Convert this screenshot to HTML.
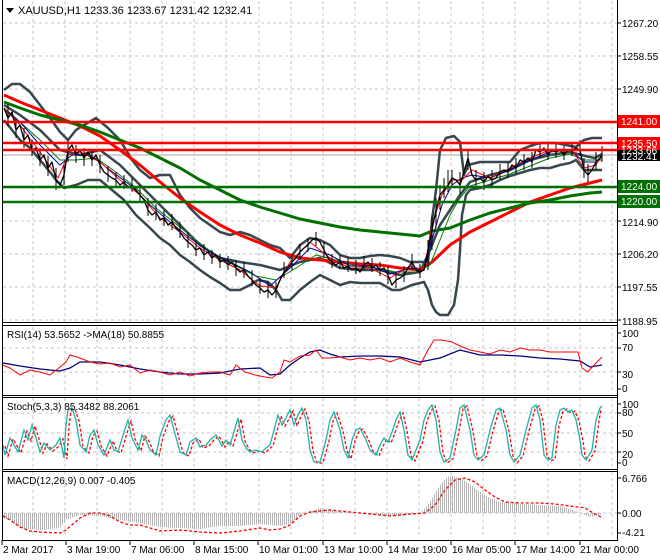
<!DOCTYPE html>
<html><head><meta charset="utf-8"><style>
html,body{margin:0;padding:0;background:#fff;}
svg{display:block;font-family:"Liberation Sans",sans-serif;}
</style></head><body>
<svg width="660" height="560" viewBox="0 0 660 560" xmlns="http://www.w3.org/2000/svg">
<defs>
<pattern id="h" width="2" height="10" patternUnits="userSpaceOnUse"><rect width="1" height="10" fill="#b4b4b4"/></pattern>
<clipPath id="cm"><rect x="3" y="1" width="614" height="321"/></clipPath>
</defs>
<rect width="660" height="560" fill="#fff"/>
<!-- grid -->
<g stroke="#c4c4c4" stroke-width="1" stroke-dasharray="3,3" fill="none">
<path d="M33 1V322M65 1V322M97 1V322M130 1V322M162 1V322M194 1V322M226 1V322M259 1V322M291 1V322M323 1V322M355 1V322M387 1V322M419 1V322M451 1V322M483 1V322M515 1V322M548 1V322M580 1V322M612 1V322"/>
<path d="M33 327V394M65 327V394M97 327V394M130 327V394M162 327V394M194 327V394M226 327V394M259 327V394M291 327V394M323 327V394M355 327V394M387 327V394M419 327V394M451 327V394M483 327V394M515 327V394M548 327V394M580 327V394M612 327V394"/>
<path d="M33 398V468M65 398V468M97 398V468M130 398V468M162 398V468M194 398V468M226 398V468M259 398V468M291 398V468M323 398V468M355 398V468M387 398V468M419 398V468M451 398V468M483 398V468M515 398V468M548 398V468M580 398V468M612 398V468"/>
<path d="M33 472V538M65 472V538M97 472V538M130 472V538M162 472V538M194 472V538M226 472V538M259 472V538M291 472V538M323 472V538M355 472V538M387 472V538M419 472V538M451 472V538M483 472V538M515 472V538M548 472V538M580 472V538M612 472V538"/>
<path d="M3 23H617M3 56H617M3 89H617M3 122H617M3 155H617M3 188H617M3 221H617M3 254H617M3 287H617M3 320H617"/>
<path d="M3 348H617M3 372H617M3 413H617M3 433H617M3 452H617M3 513H617"/>
</g>
<g clip-path="url(#cm)" fill="none" stroke-linejoin="round">
<line x1="3" y1="155" x2="617" y2="155" stroke="#c0c0c0" stroke-width="1.5"/>
<!-- bollinger -->
<polyline stroke="#37474f" stroke-width="2.5" points="4,90 12,84 20,84 30,92 40,105 50,118 60,132 68,140 76,130 84,125 96,118 108,128 120,140 132,160 140,170 150,178 160,175 170,175 180,195 190,208 200,218 210,225 220,232 230,235 240,232 250,235 260,240 270,245 280,248 290,258 300,245 310,238 320,240 330,245 340,255 350,258 360,258 370,256 380,255 390,256 400,258 410,262 420,262 428,262 432,220 436,190 440,150 446,138 454,136 460,142 464,175 468,165 480,162 490,162 500,162 510,162 520,150 530,146 540,143 548,143 556,143 566,145 576,147 584,140 592,138 602,138"/>
<polyline stroke="#37474f" stroke-width="2.5" points="4,120 12,130 20,140 30,148 40,160 50,172 56,180 64,188 76,185 88,180 100,180 112,190 124,200 136,215 150,228 160,238 170,245 180,255 190,262 200,270 210,277 220,283 230,290 240,290 250,285 258,280 268,282 276,290 282,300 290,300 300,290 310,282 320,275 330,280 340,285 350,282 360,283 370,283 380,283 392,290 400,290 412,285 424,282 428,290 432,305 436,312 440,315 448,315 454,305 458,280 460,250 462,215 466,195 470,190 480,188 490,185 500,180 510,176 520,173 530,170 540,168 550,168 560,165 570,163 576,160 584,170 592,170 602,170"/>
<polyline stroke="#37474f" stroke-width="2.5" points="4,105 20,115 40,130 60,150 80,155 100,150 120,165 140,185 160,205 180,225 200,245 220,258 240,262 260,265 280,270 300,262 320,258 340,268 360,270 380,270 400,275 420,272 430,250 440,225 450,210 460,195 470,182 490,175 510,170 530,160 550,155 570,152 585,156 595,158 602,154"/>
<!-- slow MAs -->
<polyline stroke="#ff0000" stroke-width="3" points="4,95 20,102 40,110 60,118 80,126 100,136 120,150 140,165 160,182 180,198 200,212 220,225 240,235 260,243 280,252 300,258 320,260 340,262 360,264 380,265 400,268 420,270 432,262 450,245 470,232 490,222 510,212 530,202 550,195 570,188 590,183 602,180"/>
<polyline stroke="#007000" stroke-width="3" points="4,102 20,108 40,115 60,120 80,125 100,132 120,140 140,148 160,158 180,168 200,180 220,190 240,200 260,207 280,213 300,219 320,223 340,227 360,230 380,232 400,234 420,236 432,231 450,228 470,220 490,213 510,208 530,203 550,200 570,196 590,193 602,192"/>
<!-- thin MAs -->
<polyline stroke="#008000" stroke-width="1" points="4,110 20,122 40,140 60,160 76,160 96,158 116,172 136,188 156,208 176,224 196,240 216,256 236,266 256,276 276,280 296,268 316,255 336,260 356,266 376,268 396,272 416,272 430,265 440,240 450,215 460,198 470,186 490,180 510,174 530,166 550,158 570,154 585,160 602,160"/>
<polyline stroke="#0000a0" stroke-width="1" points="4,108 20,122 40,145 60,165 72,155 90,155 110,170 130,185 150,205 170,222 190,238 210,252 230,262 250,272 270,286 290,268 310,248 330,255 350,266 370,266 390,274 410,268 424,270 432,240 442,205 452,185 462,178 472,175 490,178 510,170 530,160 550,152 570,150 584,162 596,162 602,156"/>
<polyline stroke="#ff0000" stroke-width="1" points="4,108 20,125 40,152 58,178 68,155 80,152 100,162 120,180 140,195 160,218 180,232 200,248 220,260 240,270 260,286 276,288 290,262 310,242 330,258 350,268 370,268 390,278 410,266 424,270 432,225 442,195 452,180 462,180 472,170 490,178 510,168 530,158 550,150 572,150 584,168 596,165 602,156"/>
<!-- price bars -->
<polyline stroke="#000" stroke-width="1.3" points="4,108 8,118 12,112 16,130 20,125 24,140 28,135 32,150 36,148 40,160 44,155 48,168 52,162 56,180 60,185 64,175 68,150 72,145 76,155 80,150 84,158 88,152 92,160 96,155 100,165 104,172 108,175 112,178 116,180 120,185 124,182 128,188 132,185 136,190 140,195 144,200 148,210 152,215 156,212 160,220 164,218 168,225 172,222 176,228 180,232 184,238 188,242 192,245 196,250 200,248 204,255 208,252 212,258 216,255 220,262 224,260 228,265 232,262 236,268 240,272 244,270 248,276 252,280 256,285 260,288 264,292 268,290 272,295 276,290 280,280 284,272 288,268 292,262 296,258 300,252 304,248 308,245 312,240 316,238 320,242 324,250 328,258 332,262 336,265 340,262 344,268 348,266 352,270 356,268 360,272 364,265 368,262 372,268 376,265 380,270 384,268 388,275 392,285 396,280 400,278 404,275 408,268 412,262 416,270 420,272 424,270 428,250 432,230 436,210 440,195 444,190 448,185 452,178 456,180 460,185 464,172 468,158 472,175 476,180 480,178 484,182 488,176 492,180 496,178 500,172 504,170 508,172 512,165 516,168 520,160 524,162 528,158 532,162 536,150 540,152 544,148 548,155 552,150 556,152 560,150 564,155 568,150 572,150 576,148 580,150 584,170 588,175 592,170 596,162 600,158 602,155"/>
<path stroke="#000" stroke-width="1" d="M8 104v22M16 118v20M24 128v20M32 140v16M40 148v18M48 156v20M56 168v22M64 165v20M68 140v22M76 145v18M84 148v18M92 150v16M100 155v18M108 166v16M116 172v16M124 175v14M132 178v14M140 185v18M148 198v18M156 204v16M164 210v16M172 214v16M180 222v16M188 232v16M196 240v16M204 244v16M212 250v14M220 254v14M228 256v14M236 260v16M244 262v16M252 270v16M260 278v16M268 282v16M276 282v16M284 262v16M292 254v16M300 244v16M308 238v14M316 232v14M324 242v16M332 254v14M340 255v14M348 258v14M356 260v14M364 256v14M372 258v14M380 262v14M388 266v18M396 272v16M404 266v16M412 254v16M420 264v14M428 240v30M432 215v35M436 198v30M440 185v25M444 178v20M448 170v22M452 170v18M460 172v22M468 150v20M476 170v18M484 172v18M492 170v16M500 164v16M508 162v16M516 158v16M524 154v16M532 152v16M540 144v14M548 144v16M556 144v14M564 146v14M572 142v14M580 140v16M584 158v20M588 164v18M596 152v18M602 146v16"/>
<!-- levels -->
<g stroke-width="2.5">
<line x1="3" y1="122" x2="617" y2="122" stroke="#ff0000"/>
<line x1="3" y1="143" x2="617" y2="143" stroke="#ff0000"/>
<line x1="3" y1="150" x2="617" y2="150" stroke="#ff0000"/>
<line x1="3" y1="187" x2="617" y2="187" stroke="#007000"/>
<line x1="3" y1="202" x2="617" y2="202" stroke="#007000"/>
</g>
</g>
<!-- RSI -->
<polyline fill="none" stroke="#000080" stroke-width="1.3" points="3,363 20,366 40,369 60,371 70,368 80,362 100,362 120,365 140,369 160,372 180,374 200,374 220,373 240,369 260,368 270,375 280,374 290,365 300,358 310,352 320,350 330,354 340,357 360,356 380,356 400,357 420,362 440,358 460,350 480,355 500,355 520,356 540,358 560,359 580,361 590,367 602,365"/>
<polyline fill="none" stroke="#ff0000" stroke-width="1" points="3,365 10,368 20,375 30,370 40,372 50,375 60,367 66,362 70,355 80,358 90,362 100,364 110,363 120,367 130,365 140,373 150,370 160,372 170,375 180,372 190,376 200,373 210,372 220,372 230,375 236,365 245,372 255,375 265,377 272,378 280,372 284,360 290,362 300,356 310,355 316,350 322,358 330,358 340,357 350,360 360,358 370,360 380,358 390,362 400,358 410,362 420,365 428,350 434,340 442,340 452,342 460,346 470,350 480,352 490,354 500,350 510,352 520,348 530,350 540,350 550,352 560,352 572,352 578,352 582,368 588,372 594,365 602,357"/>
<!-- Stoch -->
<polyline fill="none" stroke="#ff0000" stroke-width="1.3" stroke-dasharray="3,2" transform="translate(3,1)" points="2,445 5,455 10,438 14,445 18,452 24,430 28,440 32,425 36,438 40,452 44,443 50,450 56,445 60,438 64,458 66,425 68,410 72,408 76,420 80,445 86,452 90,435 94,430 98,445 104,455 110,440 114,450 118,452 124,432 128,420 132,438 138,450 142,435 146,440 150,450 156,455 160,436 166,420 170,415 174,430 180,452 186,455 190,442 196,438 200,447 206,445 210,440 216,435 222,446 226,440 230,445 234,432 238,418 242,440 246,448 250,452 256,450 262,452 266,448 270,445 274,430 278,415 282,425 286,418 290,410 294,425 298,415 302,408 306,420 310,450 314,462 320,462 326,440 330,420 334,412 340,430 344,450 348,458 352,440 356,430 360,428 366,440 370,450 376,455 380,445 384,438 388,442 392,432 396,420 400,412 404,430 408,455 412,460 416,450 420,440 424,420 428,410 432,405 436,420 440,452 444,462 450,458 456,430 460,408 464,405 470,430 474,455 478,460 484,455 490,430 496,410 500,408 506,430 510,455 514,462 520,455 526,430 532,408 536,405 540,420 544,455 548,460 552,458 556,425 560,410 564,408 568,412 572,410 576,420 580,440 582,455 586,460 592,450 596,420 598,408"/>
<polyline fill="none" stroke="#20b2aa" stroke-width="1.3" points="3,445 5,455 10,438 14,445 18,452 24,430 28,440 32,425 36,438 40,452 44,443 50,450 56,445 60,438 64,458 66,425 68,410 72,408 76,420 80,445 86,452 90,435 94,430 98,445 104,455 110,440 114,450 118,452 124,432 128,420 132,438 138,450 142,435 146,440 150,450 156,455 160,436 166,420 170,415 174,430 180,452 186,455 190,442 196,438 200,447 206,445 210,440 216,435 222,446 226,440 230,445 234,432 238,418 242,440 246,448 250,452 256,450 262,452 266,448 270,445 274,430 278,415 282,425 286,418 290,410 294,425 298,415 302,408 306,420 310,450 314,462 320,462 326,440 330,420 334,412 340,430 344,450 348,458 352,440 356,430 360,428 366,440 370,450 376,455 380,445 384,438 388,442 392,432 396,420 400,412 404,430 408,455 412,460 416,450 420,440 424,420 428,410 432,405 436,420 440,452 444,462 450,458 456,430 460,408 464,405 470,430 474,455 478,460 484,455 490,430 496,410 500,408 506,430 510,455 514,462 520,455 526,430 532,408 536,405 540,420 544,455 548,460 552,458 556,425 560,410 564,408 568,412 572,410 576,420 580,440 582,455 586,460 592,450 596,420 600,408 602,406"/>
<!-- MACD -->
<polygon fill="url(#h)" points="3,513 3,518 10,520 20,528 40,530 60,528 66,520 80,515 100,516 120,520 140,523 160,527 180,528 200,529 220,526 240,526 260,524 280,526 290,524 300,515 320,508 340,512 360,513 380,515 400,516 420,513 428,505 434,495 440,485 446,478 452,476 460,478 470,484 480,492 490,498 500,502 520,504 540,505 560,506 570,509 580,513 590,517 600,515 602,513"/>
<polyline fill="none" stroke="#ff0000" stroke-width="1.3" stroke-dasharray="3,2" points="3,516 10,520 20,527 30,531 40,532 60,533 66,530 80,518 90,513 100,513 110,516 120,522 130,525 140,525 150,528 160,531 180,530 200,532 220,533 240,531 260,528 270,530 280,529 290,525 300,516 310,512 330,510 350,512 370,514 390,516 410,514 425,513 435,505 445,490 455,480 465,478 475,482 485,490 495,497 505,502 520,503 540,503 555,504 570,506 585,508 595,514 603,518"/>
<!-- borders -->
<g stroke="#000" stroke-width="1" fill="none">
<path d="M2.5 0V540.5H617.5V0"/>
<path d="M2.5 322.5H617.5M2.5 325.5H617.5M2.5 395.5H617.5M2.5 397.5H617.5M2.5 469.5H617.5M2.5 471.5H617.5"/>
<path d="M617 23h4M617 56h4M617 89h4M617 122h4M617 155h4M617 188h4M617 221h4M617 254h4M617 287h4M617 320h4M617 333h4M617 348h4M617 372h4M617 389h4M617 404h4M617 413h4M617 433h4M617 452h4M617 463h4M617 478h4M617 513h4M617 533h4"/>
<path d="M2 540v5M66 540v5M130 540v5M194 540v5M258 540v5M323 540v5M387 540v5M451 540v5M515 540v5M580 540v5"/>
</g>
<!-- header -->
<path d="M6 8h8l-4 5z" fill="#000"/>
<text x="18" y="14" font-size="11" fill="#000">XAUUSD,H1  1233.36 1233.67 1231.42 1232.41</text>
<text x="7" y="338" font-size="10" fill="#000">RSI(14) 53.5652  -&gt;MA(18) 50.8855</text>
<text x="7" y="410" font-size="10" fill="#000">Stoch(5,3,3) 85.3482 88.2061</text>
<text x="7" y="484" font-size="10" fill="#000">MACD(12,26,9) 0.007 -0.405</text>
<!-- right axis -->
<g font-size="10" fill="#000">
<text x="622" y="27">1267.20</text><text x="622" y="60">1258.55</text><text x="622" y="93">1249.90</text>
<text x="622" y="226">1214.90</text><text x="622" y="258">1206.20</text><text x="622" y="291">1197.55</text><text x="622" y="325">1188.95</text>
<text x="622" y="337">100</text><text x="622" y="351">70</text><text x="622" y="378">30</text><text x="622" y="392">0</text>
<text x="622" y="408">100</text><text x="622" y="416">80</text><text x="622" y="437">50</text><text x="622" y="458">20</text><text x="622" y="466">0</text>
<text x="622" y="482">6.766</text><text x="622" y="517">0.00</text><text x="622" y="536">-4.21</text>
</g>
<rect x="618" y="115" width="42" height="13" fill="#ff0000"/>
<rect x="618" y="137" width="42" height="13" fill="#ff0000"/>
<rect x="618" y="144" width="42" height="12" fill="#ff0000"/>
<rect x="618" y="150" width="42" height="11" fill="#000"/>
<rect x="618" y="180" width="42" height="13" fill="#007000"/>
<rect x="618" y="195" width="42" height="13" fill="#007000"/>
<g font-size="10" fill="#fff">
<text x="621" y="125">1241.00</text>
<text x="621" y="160">1232.41</text>
<text x="621" y="154">1233.66</text>
<text x="621" y="147">1235.50</text>
<text x="621" y="190">1224.00</text>
<text x="621" y="205">1220.00</text>
</g>
<!-- time axis -->
<g font-size="10" fill="#000">
<text x="3" y="553">2 Mar 2017</text><text x="67" y="553">3 Mar 19:00</text><text x="131" y="553">7 Mar 06:00</text>
<text x="195" y="553">8 Mar 15:00</text><text x="259" y="553">10 Mar 01:00</text><text x="324" y="553">13 Mar 10:00</text>
<text x="388" y="553">14 Mar 19:00</text><text x="452" y="553">16 Mar 05:00</text><text x="516" y="553">17 Mar 14:00</text>
<text x="580" y="553">21 Mar 00:00</text>
</g>
</svg>
</body></html>
